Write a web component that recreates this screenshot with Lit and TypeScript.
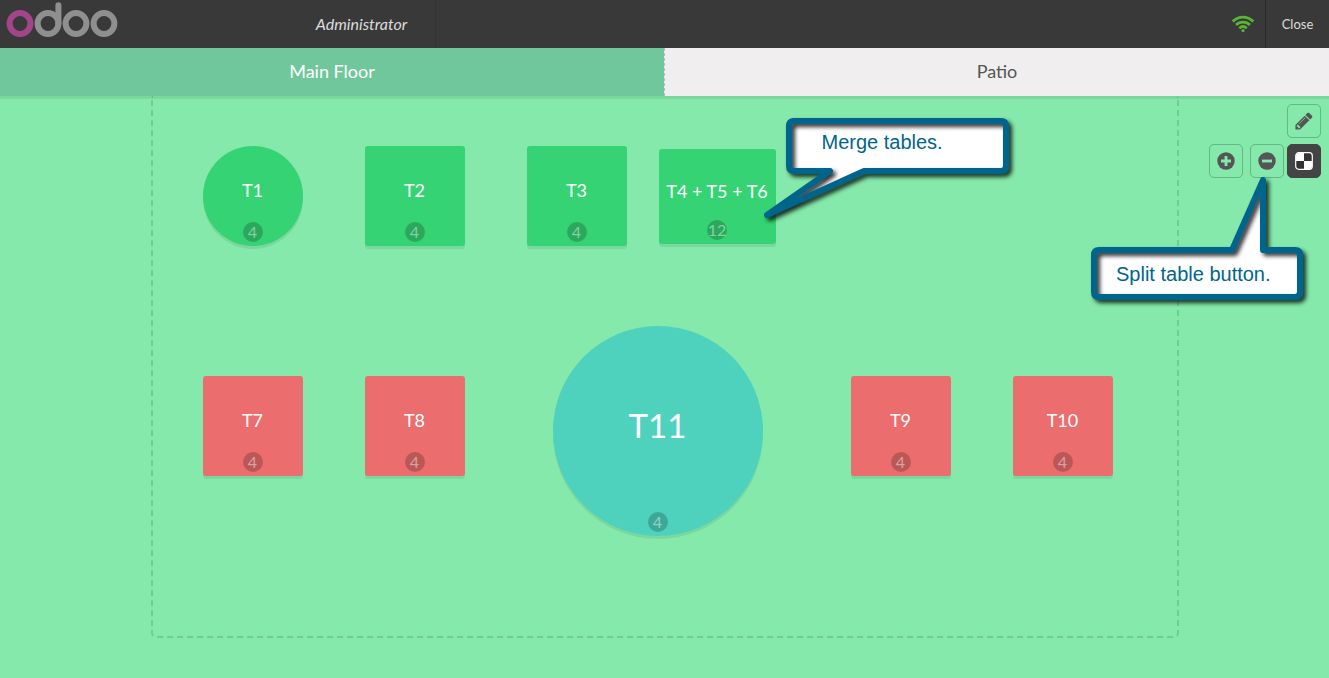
import { LitElement, html, css, svg } from "lit";
import { customElement, property, state } from "lit/decorators.js";
import { classMap } from "lit/directives/class-map.js";
import { styleMap } from "lit/directives/style-map.js";

interface FloorTable {
  name: string;
  seats: number;
  x: number;
  y: number;
  w: number;
  h: number;
  tone: "green" | "red" | "teal";
  round?: boolean;
  large?: boolean;
}

const MAIN_FLOOR: FloorTable[] = [
  { name: "T1", seats: 4, x: 50, y: 50, w: 100, h: 100, tone: "green", round: true },
  { name: "T2", seats: 4, x: 212, y: 50, w: 100, h: 100, tone: "green" },
  { name: "T3", seats: 4, x: 374, y: 50, w: 100, h: 100, tone: "green" },
  { name: "T4 + T5 + T6", seats: 12, x: 506, y: 53, w: 117, h: 95, tone: "green" },
  { name: "T7", seats: 4, x: 50, y: 280, w: 100, h: 100, tone: "red" },
  { name: "T8", seats: 4, x: 212, y: 280, w: 100, h: 100, tone: "red" },
  { name: "T11", seats: 4, x: 400, y: 230, w: 210, h: 210, tone: "teal", round: true, large: true },
  { name: "T9", seats: 4, x: 698, y: 280, w: 100, h: 100, tone: "red" },
  { name: "T10", seats: 4, x: 860, y: 280, w: 100, h: 100, tone: "red" },
];

@customElement("pos-logo")
class PosLogo extends LitElement {
  static styles = css`
    :host { display: block; }
    .mark { display: block; }
  `;
  render() {
    return html`<svg class="mark" width="120" height="40" viewBox="0 0 120 40" role="img" aria-label="odoo"
      fill="none" stroke="#8f8f8f" stroke-width="6" stroke-linecap="round">
      <circle cx="48" cy="23.5" r="10.4" />
      <path d="M58.4 23.5V5.2" />
      <circle cx="76" cy="23.5" r="10.4" />
      <circle cx="104" cy="23.5" r="10.4" />
      <circle cx="20" cy="23.5" r="10.4" stroke="#a24689" />
    </svg>`;
  }
}

@customElement("floor-table")
class FloorTableView extends LitElement {
  @property({ attribute: false }) table!: FloorTable;

  static styles = css`
    :host { display: block; }
    .table {
      display: flex;
      flex-direction: column;
      align-items: center;
      justify-content: flex-end;
      width: 100%;
      height: 100%;
      padding: 0 0 4px;
      border: 0;
      border-radius: 3px;
      box-shadow: 0 3px rgba(0, 0, 0, 0.07);
      color: #fff;
      font: 18px/24px Lato, sans-serif;
      white-space: nowrap;
      cursor: pointer;
    }
    .green { background: #35d374; }
    .red { background: #eb6d6d; }
    .teal { background: #4ed2be; }
    .round { border-radius: 50%; }
    .name {
      flex: 1;
      display: flex;
      align-items: center;
      padding-top: 12px;
    }
    .large .name { font-size: 33px; }
    .seats {
      width: 20px;
      height: 20px;
      border-radius: 50%;
      background: rgba(0, 0, 0, 0.2);
      color: rgba(255, 255, 255, 0.45);
      font-size: 16px;
      line-height: 20px;
      display: flex;
      justify-content: center;
    }
  `;

  render() {
    const t = this.table;
    return html`<button type="button"
      class=${classMap({ table: true, [t.tone]: true, round: !!t.round, large: !!t.large })}>
      <span class="name">${t.name}</span>
      <span class="seats">${t.seats}</span>
    </button>`;
  }
}

@customElement("callout-note")
class CalloutNote extends LitElement {
  @property() shape = "";
  @property({ type: Number }) width = 0;
  @property({ type: Number }) height = 0;

  static styles = css`
    :host { display: block; pointer-events: none; }
    .note { display: grid; }
    .bubble { grid-area: 1 / 1; overflow: visible; }
    .outline { filter: drop-shadow(3px 3px 2px rgba(0, 0, 0, 0.8)); }
    .text {
      grid-area: 1 / 1;
      position: relative;
      color: #00658c;
      font: 20px/24px "Liberation Sans", Arial, sans-serif;
      white-space: nowrap;
    }
  `;

  render() {
    return html`<div class="note">
      <svg class="bubble" width=${this.width} height=${this.height} aria-hidden="true">
        <path d=${this.shape} fill="#fff" />
        <path class="outline" d=${this.shape} fill="none" stroke="#00658c" stroke-width="6" stroke-linejoin="round" />
      </svg>
      <span class="text"><slot></slot></span>
    </div>`;
  }
}

const wifiIcon = svg`<svg width="24" height="18" viewBox="0 0 24 18" fill="none" stroke="#5ab534" stroke-width="2.8">
  <path d="M1.7 6.6C7.6 .7 16.4 .7 22.3 6.6" />
  <path d="M5.1 10C9 6.2 15 6.2 18.9 10" />
  <path d="M8.3 13.2C10.5 11.2 13.5 11.2 15.7 13.2" />
  <circle cx="12" cy="15.6" r="1.6" fill="#5ab534" stroke="none" />
</svg>`;

const pencilIcon = svg`<svg width="20" height="20" viewBox="0 0 1792 1792" fill="#555">
  <path d="M491 1536l91-91-235-235-91 91v107h128v128h107zM1014 608q0-22-22-22-10 0-17 7l-542 542q-7 7-7 17 0 22 22 22 10 0 17-7l542-542q7-7 7-17zm-54-192l416 416-832 832h-416v-416zm683 96q0 53-37 90l-166 166-416-416 166-165q36-38 90-38 53 0 91 38l235 234q37 39 37 91z" />
</svg>`;

const plusIcon = svg`<svg width="18" height="18" viewBox="0 0 18 18">
  <circle cx="9" cy="9" r="8.7" fill="#555" />
  <path d="M4 9h10M9 4v10" stroke="#84e9ab" stroke-width="2.8" />
</svg>`;

const minusIcon = svg`<svg width="18" height="18" viewBox="0 0 18 18">
  <circle cx="9" cy="9" r="8.7" fill="#555" />
  <path d="M4 9h10" stroke="#84e9ab" stroke-width="2.8" />
</svg>`;

const checkerIcon = svg`<svg width="18" height="18" viewBox="0 0 18 18">
  <rect x=".7" y=".7" width="16.6" height="16.6" rx="3" fill="#333" stroke="#fff" stroke-width="1.2" />
  <path d="M9 1H4Q1 1 1 4V9H9ZM9 9V17H14Q17 17 17 14V9Z" fill="#fff" />
</svg>`;

@customElement("app-root")
class AppRoot extends LitElement {
  @state() private floor = "Main Floor";

  static styles = css`
    :host {
      display: flex;
      flex-direction: column;
      min-height: 100vh;
      background: #84e9ab;
      font-family: Lato, sans-serif;
      overflow: hidden;
    }
    .topbar {
      display: flex;
      height: 48px;
      background: #393939;
      color: #ddd;
    }
    .brand { flex: 0 0 288px; }
    .user {
      width: 148px;
      box-sizing: border-box;
      padding: 0;
      border: 0;
      border-right: 1px solid #343434;
      background: none;
      color: inherit;
      font: italic 16px/48px Lato, sans-serif;
    }
    .status {
      margin-left: auto;
      padding-right: 10px;
      display: flex;
      align-items: center;
    }
    .close {
      width: 64px;
      padding: 0;
      border: 0;
      border-left: 1px solid #292929;
      background: none;
      color: inherit;
      font: 13px/48px Lato, sans-serif;
    }
    .floors { display: flex; height: 48px; }
    .floor {
      flex: 1;
      padding: 0 0 2px;
      border: 0;
      background: #f0eeee;
      color: #555;
      font: 18px/46px Lato, sans-serif;
    }
    .floor + .floor { border-left: 1px dashed #bbb; }
    .floor.active { background: #6fc79b; color: #fff; }
    .stage {
      flex: 1;
      position: relative;
      display: flex;
      justify-content: center;
      align-items: flex-start;
      box-shadow: inset 0 3px rgba(0, 0, 0, 0.07);
    }
    .map {
      position: relative;
      box-sizing: border-box;
      width: 1028px;
      height: 542px;
      border: 2px dashed rgba(0, 0, 0, 0.13);
      border-top: 0;
      border-radius: 0 0 5px 5px;
    }
    .spot { position: absolute; }
    .tools {
      position: absolute;
      top: 8px;
      right: 8px;
      display: grid;
      grid-template-columns: auto 34px;
      gap: 6px 3px;
    }
    .pair { display: flex; gap: 7px; }
    .tool {
      display: flex;
      align-items: center;
      justify-content: center;
      width: 34px;
      height: 34px;
      padding: 0;
      border: 1px solid rgba(0, 0, 0, 0.22);
      border-radius: 5px;
      background: none;
    }
    .edit { grid-column: 2; }
    .shade { background: #444; border-color: #444; }
    .merge-note { position: absolute; left: 610px; top: 18px; }
    .split-note { position: absolute; right: 25px; top: 78px; }
    .merge-text { display: block; padding: 16px 0 0 59px; }
    .split-text { display: block; padding: 88px 0 0 28px; }
  `;

  render() {
    return html`
      <header class="topbar">
        <pos-logo class="brand"></pos-logo>
        <button class="user" type="button">Administrator</button>
        <span class="status" role="img" aria-label="Connected">${wifiIcon}</span>
        <button class="close" type="button">Close</button>
      </header>
      <nav class="floors">
        ${["Main Floor", "Patio"].map(
          (name) => html`<button type="button"
            class=${classMap({ floor: true, active: this.floor === name })}
            @click=${() => (this.floor = name)}>${name}</button>`
        )}
      </nav>
      <main class="stage">
        <div class="map">
          ${MAIN_FLOOR.map(
            (t) => html`<floor-table class="spot" .table=${t}
              style=${styleMap({ left: `${t.x}px`, top: `${t.y}px`, width: `${t.w}px`, height: `${t.h}px` })}></floor-table>`
          )}
          <callout-note class="merge-note" width="246" height="104"
            shape="M30 7H238Q243 7 243 12V52Q243 57 238 57H101L4 101L67 57H31Q26 57 26 52V12Q26 7 31 7Z">
            <span class="merge-text">Merge tables.</span>
          </callout-note>
        </div>
        <div class="tools">
          <button class="tool edit" type="button" aria-label="Edit floor">${pencilIcon}</button>
          <div class="pair">
            <button class="tool" type="button" aria-label="Add">${plusIcon}</button>
            <button class="tool" type="button" aria-label="Split table">${minusIcon}</button>
          </div>
          <button class="tool shade" type="button" aria-label="Merge tables">${checkerIcon}</button>
        </div>
        <callout-note class="split-note" width="216" height="128"
          shape="M11 76H144L175 6V76H207Q212 76 212 81V118Q212 123 207 123H11Q6 123 6 118V81Q6 76 11 76Z">
          <span class="split-text">Split table button.</span>
        </callout-note>
      </main>
    `;
  }
}
